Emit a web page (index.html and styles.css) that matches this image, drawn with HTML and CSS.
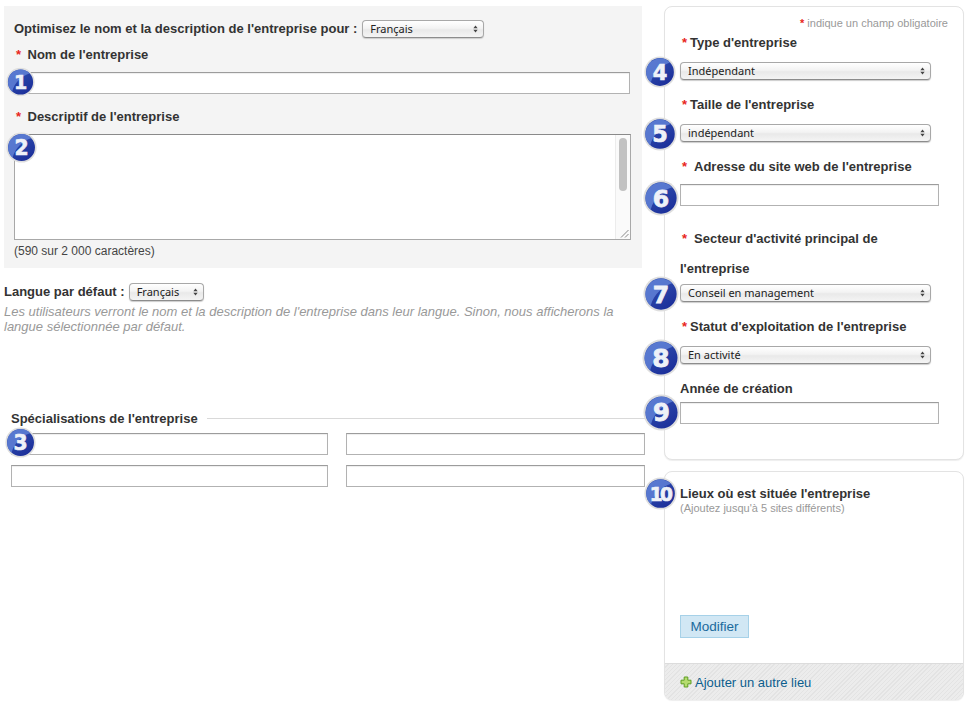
FILE: index.html
```html
<!DOCTYPE html>
<html lang="fr">
<head>
<meta charset="utf-8">
<title>Entreprise</title>
<link rel="stylesheet" href="styles.css">
</head>
<body>
<svg class="defs" width="0" height="0" aria-hidden="true">
  <defs>
    <linearGradient id="ball" x1="0" y1="0" x2="0.7" y2="1">
      <stop offset="0" stop-color="#3456b4"/>
      <stop offset="1" stop-color="#1c2f9a"/>
    </linearGradient>
    <symbol id="disc" viewBox="0 0 32 32">
      <circle cx="16" cy="16" r="15.6" fill="#dedede"/>
      <circle cx="16" cy="16" r="13.9" fill="url(#ball)"/>
      <path d="M2.2 16.500A13.900 13.900 0 0 1 26 6.500C18 9 9.500 16 6.800 26.500A14 14 0 0 1 2.200 16.500Z" fill="#5f80d6" opacity=".85"/>
    </symbol>
  </defs>
</svg>
<main class="page">
  <div class="left">
    <section class="panel">
      <div class="opt-row">
        <span class="label">Optimisez le nom et la description de l'entreprise pour :</span>
        <span class="sel sel-opt"><select><option>Français</option></select><svg class="arr" viewBox="0 0 7 10"><path d="M3.500 0 6.500 4H.5ZM3.500 10 .5 6H6.500Z"/></svg></span>
      </div>
      <div class="label lab-nom"><span class="req">*</span>Nom de l'entreprise</div>
      <div class="field">
        <input class="inp inp-nom" type="text">
        <svg class="badge b1" viewBox="0 0 32 32"><use href="#disc"/><text x="16" y="23.700" class="num">1</text></svg>
      </div>
      <div class="label lab-desc"><span class="req">*</span>Descriptif de l'entreprise</div>
      <div class="field">
        <div class="ta">
          <div class="ta-gutter"><span class="ta-thumb"></span>
            <svg class="ta-grip" viewBox="0 0 9 9"><path d="M8.500 1 1 8.500M8.500 5 5 8.500" stroke="#888" fill="none"/></svg>
          </div>
        </div>
        <svg class="badge b2" viewBox="0 0 32 32"><use href="#disc"/><text x="16" y="23.700" class="num">2</text></svg>
      </div>
      <div class="count">(590 sur 2 000 caractères)</div>
    </section>

    <div class="lang-row">
      <span class="label">Langue par défaut :</span>
      <span class="sel sel-lang"><select><option>Français</option></select><svg class="arr" viewBox="0 0 7 10"><path d="M3.500 0 6.500 4H.5ZM3.500 10 .5 6H6.500Z"/></svg></span>
    </div>
    <p class="hint">Les utilisateurs verront le nom et la description de l'entreprise dans leur langue. Sinon, nous afficherons la langue sélectionnée par défaut.</p>

    <section class="spec">
      <div class="spec-head"><span class="label">Spécialisations de l'entreprise</span><span class="rule"></span></div>
      <div class="spec-grid">
        <div class="field">
          <input class="inp" type="text">
          <svg class="badge b3" viewBox="0 0 32 32"><use href="#disc"/><text x="16" y="23.700" class="num">3</text></svg>
        </div>
        <input class="inp" type="text">
        <input class="inp" type="text">
        <input class="inp" type="text">
      </div>
    </section>
  </div>

  <aside class="right">
    <section class="card card-main">
      <div class="note"><span class="req-n">*</span> indique un champ obligatoire</div>
      <div class="label lab-r lab-type"><span class="req-t">*</span>Type d'entreprise</div>
      <div class="field">
        <span class="sel sel-wide"><select><option>Indépendant</option></select><svg class="arr" viewBox="0 0 7 10"><path d="M3.500 0 6.500 4H.5ZM3.500 10 .5 6H6.500Z"/></svg></span>
        <svg class="badge b4" viewBox="0 0 32 32"><use href="#disc"/><text x="16" y="23.700" class="num">4</text></svg>
      </div>
      <div class="label lab-r"><span class="req-t">*</span>Taille de l'entreprise</div>
      <div class="field">
        <span class="sel sel-wide"><select><option>indépendant</option></select><svg class="arr" viewBox="0 0 7 10"><path d="M3.500 0 6.500 4H.5ZM3.500 10 .5 6H6.500Z"/></svg></span>
        <svg class="badge b5" viewBox="0 0 32 32"><use href="#disc"/><text x="16" y="23.700" class="num">5</text></svg>
      </div>
      <div class="label lab-r"><span class="req-s">*</span>Adresse du site web de l'entreprise</div>
      <div class="field">
        <input class="inp inp-r" type="text">
        <svg class="badge b6" viewBox="0 0 32 32"><use href="#disc"/><text x="16" y="23.700" class="num">6</text></svg>
      </div>
      <div class="label lab-sect"><span class="req-s">*</span>Secteur d'activité principal de<br>l'entreprise</div>
      <div class="field">
        <span class="sel sel-wide"><select><option>Conseil en management</option></select><svg class="arr" viewBox="0 0 7 10"><path d="M3.500 0 6.500 4H.5ZM3.500 10 .5 6H6.500Z"/></svg></span>
        <svg class="badge b7" viewBox="0 0 32 32"><use href="#disc"/><text x="16" y="23.700" class="num">7</text></svg>
      </div>
      <div class="label lab-r"><span class="req-t">*</span>Statut d'exploitation de l'entreprise</div>
      <div class="field">
        <span class="sel sel-wide"><select><option>En activité</option></select><svg class="arr" viewBox="0 0 7 10"><path d="M3.500 0 6.500 4H.5ZM3.500 10 .5 6H6.500Z"/></svg></span>
        <svg class="badge b8" viewBox="0 0 32 32"><use href="#disc"/><text x="16" y="23.700" class="num">8</text></svg>
      </div>
      <div class="label lab-r lab-annee">Année de création</div>
      <div class="field">
        <input class="inp inp-r" type="text">
        <svg class="badge b9" viewBox="0 0 32 32"><use href="#disc"/><text x="16" y="23.700" class="num">9</text></svg>
      </div>
    </section>

    <section class="card card-loc">
      <div class="loc-body">
        <div class="field">
          <div class="label loc-title">Lieux où est située l'entreprise</div>
          <svg class="badge b10" viewBox="0 0 32 32"><use href="#disc"/><text x="15.500" y="23" class="num num-10">10</text></svg>
        </div>
        <div class="loc-sub">(Ajoutez jusqu'à 5 sites différents)</div>
        <button class="btn" type="button">Modifier</button>
      </div>
      <div class="loc-foot">
        <svg class="plus" viewBox="0 0 12 12"><path d="M4.200 1h3.600v3.200H11v3.600H7.800V11H4.200V7.800H1V4.200h3.200Z" fill="#b5dc6e" stroke="#5f9e22"/></svg>
        <a class="add" href="#">Ajouter un autre lieu</a>
      </div>
    </section>
  </aside>
</main>
</body>
</html>
```

FILE: styles.css
```css
* { box-sizing: border-box; }
html, body { margin: 0; padding: 0; background: #fff; }
body { font-family: "Liberation Sans", Arial, sans-serif; font-size: 12px; color: #333; }
.defs { position: absolute; }

.page { display: flex; align-items: flex-start; gap: 22px; padding: 6px 0 0 4px; width: 970px; height: 709px; overflow: hidden; }
.left { width: 638px; flex: none; }
.right { width: 300px; flex: none; display: flex; flex-direction: column; gap: 11px; }

.label { font-weight: bold; font-size: 13px; line-height: 16px; color: #333; }
.field { position: relative; }

.panel { background: #f4f4f4; height: 262px; padding: 14px 10px 0; }
.opt-row { display: flex; align-items: center; gap: 5px; height: 18px; }
.lab-nom { margin-top: 9px; }
.lab-desc { margin-top: 15px; }
.req { color: #e8261a; display: inline-block; width: 13.5px; padding-left: 2px; }

.inp { display: block; width: 100%; height: 22px; background: #fff; border: 1px solid #b2b2b2; border-top-color: #9c9c9c; border-radius: 0; padding: 0; margin: 0; box-shadow: inset 0 1px 1px #eee; outline: none; }
.inp-nom { margin-top: 9px; width: 616px; }

.ta { position: relative; width: 617px; height: 106px; margin-top: 9px; background: #fff; border: 1px solid #a8a8a8; border-top-color: #8a8a8a; }
.ta-gutter { position: absolute; top: 0; right: 0; bottom: 0; width: 15px; background: #fafafa; border-left: 1px solid #ececec; }
.ta-thumb { position: absolute; top: 3px; left: 3px; width: 8px; height: 53px; background: #c2c2c2; border-radius: 4px; }
.ta-grip { position: absolute; right: 1px; bottom: 1px; width: 9px; height: 9px; }
.count { margin-top: 4px; font-size: 12px; line-height: 14px; color: #444; }

.sel { position: relative; display: inline-block; height: 18px; }
.sel select { appearance: none; -webkit-appearance: none; display: block; width: 100%; height: 18px; margin: 0; padding: 0 0 0 7px; font-family: "Noto Sans", "Liberation Sans", sans-serif; font-size: 11px; line-height: 16px; color: #222; background: linear-gradient(#fff, #f3f3f3 45%, #e9e9e9 55%, #f4f4f4); border: 1px solid #a8a8a8; border-bottom-color: #8c8c8c; border-radius: 4px; box-shadow: 0 1px 1px #ccc; outline: none; }
.arr { position: absolute; top: 5px; right: 6px; width: 5px; height: 8px; fill: #444; pointer-events: none; }
.sel-opt { width: 122px; }
.sel-lang { width: 75px; }
.sel-wide { width: 251px; display: block; }

.lang-row { display: flex; align-items: center; gap: 4px; height: 18px; margin-top: 15px; }
.hint { margin: 3px 0 0; width: 620px; font-style: italic; font-size: 13px; line-height: 15px; color: #999; }

.spec { margin-top: 77px; margin-left: 7px; width: 634px; }
.spec-head { display: flex; align-items: center; gap: 9px; height: 16px; }
.rule { flex: 1; height: 1px; background: #d9d9d9; margin-top: -2px; }
.spec-grid { display: grid; grid-template-columns: 317px 299px; column-gap: 18px; row-gap: 10px; margin-top: 6px; }

.card { background: #fff; border: 1px solid #e3e3e3; border-radius: 8px; box-shadow: 0 1px 1px #eee; }
.card-main { height: 454px; padding: 9px 15px 0; }
.note { text-align: right; font-size: 11px; line-height: 15px; color: #999; }
.req-n { color: #e8261a; font-weight: bold; }
.lab-r { margin-top: 17px; }
.lab-type { margin-top: 4px; }
.lab-r + .field { margin-top: 11px; }
.req-t { color: #e8261a; display: inline-block; width: 10px; padding-left: 2px; }
.req-s { color: #e8261a; display: inline-block; width: 14px; padding-left: 2px; }
.inp-r { width: 259px; }
.lab-r + .field > .inp-r { margin-top: -2px; }
.lab-sect { margin-top: 18px; line-height: 30px; }
.lab-annee + .field { margin-top: 5px; }
.lab-annee + .field > .inp-r { margin-top: 0; }

.card-loc { height: 229px; position: relative; }
.loc-body { height: 191px; padding: 14px 15px 0; }
.loc-title { color: #333; }
.loc-sub { font-size: 11px; line-height: 13px; color: #999; }
.btn { display: block; width: 69px; height: 23px; margin-top: 100px; padding: 0; background: #d1e7f4; border: 1px solid #a6d1e8; color: #1b6a9c; font-family: "Liberation Sans", Arial, sans-serif; font-size: 13.5px; }
.loc-foot { display: flex; align-items: center; gap: 3px; height: 37px; padding-left: 15px; border-top: 1px solid #dcdcdc; border-radius: 0 0 8px 8px; background: repeating-linear-gradient(135deg, #ececec 0 2px, #e3e3e3 2px 3px); }
.plus { width: 12px; height: 12px; }
.add { font-size: 13px; color: #0b5e8e; text-decoration: none; }

.badge { position: absolute; overflow: visible; }
.num { font-family: "DejaVu Sans", "Liberation Sans", sans-serif; font-weight: bold; font-size: 21px; fill: #eef1f8; text-anchor: middle; stroke: #eef1f8; stroke-width: .7; }
.num-10 { font-size: 18px; letter-spacing: -2.500px; }
.b1 { width: 29px; height: 30px; left: -8px; top: -5px; }
.b2 { width: 31px; height: 31px; left: -8px; top: -2px; }
.b3 { width: 31px; height: 31px; left: -6px; top: -6px; }
.b4 { width: 32px; height: 32px; left: -36px; top: -6px; }
.b5 { width: 34px; height: 34px; left: -37px; top: -7px; }
.b6 { width: 36px; height: 36px; left: -37px; top: -4px; }
.b7 { width: 36px; height: 36px; left: -37px; top: -8px; }
.b8 { width: 38px; height: 38px; left: -38px; top: -7px; }
.b9 { width: 37px; height: 37px; left: -37px; top: -8px; }
.b10 { width: 33px; height: 33px; left: -36px; top: -9px; }
```
